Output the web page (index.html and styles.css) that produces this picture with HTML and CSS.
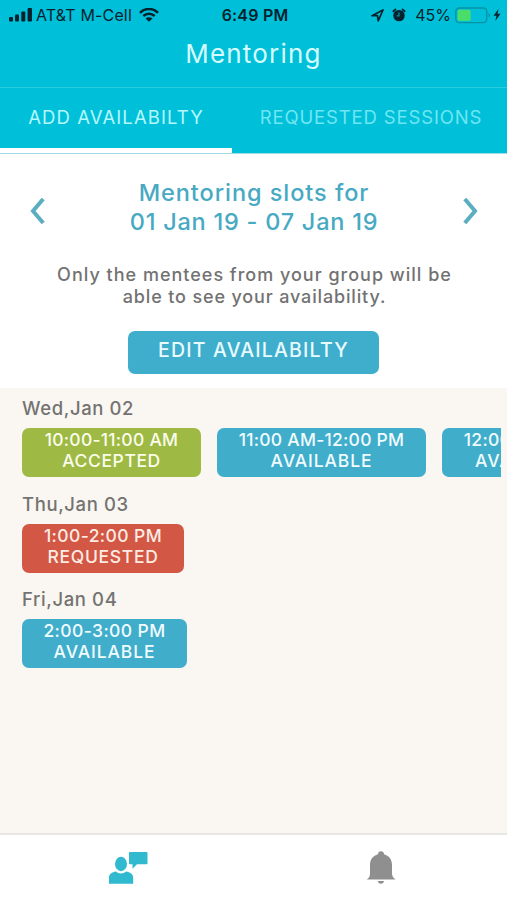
FILE: index.html
```html
<!DOCTYPE html>
<html lang="en">
<head>
    <meta charset="UTF-8">
    <meta name="viewport" content="width=device-width, initial-scale=1.0">
    <title>Mentoring</title>
    <link rel="stylesheet" href="styles.css">
</head>
<body>

    <header class="header">
        <div class="status-bar">
            <div class="status-left">
                <svg width="24" height="14" viewBox="0 0 24 14">
                    <rect x="0" y="9" width="4" height="4.5" rx="1"/>
                    <rect x="6" y="6.5" width="4" height="7" rx="1"/>
                    <rect x="12.3" y="3.5" width="4" height="10" rx="1"/>
                    <rect x="18.6" y="0" width="4.4" height="13.5" rx="1"/>
                </svg>
                <span class="carrier">AT&amp;T M-Cell</span>
                <svg class="wifi" width="20" height="14" viewBox="0 0 20 14">
                    <path d="M1 4.8C6-.2 14-.2 19 4.8M4.3 8C7.6 5 12.4 5 15.7 8" fill="none" stroke="#06222e" stroke-width="2.6"/>
                    <path d="M10 13.8L6.5 10.4C8.5 8.7 11.5 8.7 13.5 10.4Z"/>
                </svg>
            </div>
            <div class="status-time">6:49 PM</div>
            <div class="status-right">
                <svg width="13" height="13" viewBox="0 0 13 13">
                    <path d="M1 6.7L12 1L7.2 11.8L6.5 6.7Z" fill="none" stroke="#06222e" stroke-width="1.7" stroke-linejoin="round"/>
                </svg>
                <svg class="alarm" width="14" height="14" viewBox="0 0 14 14">
                    <circle cx="7" cy="7.6" r="5.7"/>
                    <path d="M.8 3.8L4 1M13.2 3.8L10 1" stroke="#06222e" stroke-width="1.8"/>
                    <path d="M7 4.3V7.8H4.6" fill="none" stroke="#0890a5" stroke-width="1.2"/>
                </svg>
                <span class="percent">45%</span>
                <svg width="37" height="17" viewBox="0 0 37 17">
                    <rect x=".8" y="1" width="31" height="14.6" rx="3.6" fill="none" stroke="#0890a5" stroke-width="1.4"/>
                    <rect x="2.6" y="2.8" width="13" height="11" rx="1.6" fill="#4ade68"/>
                    <path d="M33.5 6.2c2 .6 2 3.6 0 4.2z" fill="#0890a5"/>
                </svg>
                <svg class="bolt" width="8" height="12" viewBox="0 0 8 12">
                    <path d="M5.5 0L.5 6.8H3.5L2.3 12L7.5 4.8H4.5Z"/>
                </svg>
            </div>
        </div>
        <h1>Mentoring</h1>
        <nav class="tabs">
            <a class="tab active" href="#">ADD AVAILABILTY</a>
            <a class="tab" href="#">REQUESTED SESSIONS</a>
        </nav>
    </header>

    <section class="week">
        <div class="week-picker">
            <svg width="16" height="28" viewBox="0 0 16 28"><path d="M13.2 2L3 14L13.2 26"/></svg>
            <h2>Mentoring slots for<br><span class="dates">01 Jan 19 - 07 Jan 19</span></h2>
            <svg width="16" height="28" viewBox="0 0 16 28"><path d="M2.8 2L13 14L2.8 26"/></svg>
        </div>
        <p>Only the mentees from your group will be<br><span class="note-end">able to see your availability.</span></p>
        <button class="edit">EDIT AVAILABILTY</button>
    </section>

    <main class="days">
        <div class="day">
            <h3>Wed,Jan 02</h3>
            <div class="slots">
                <div class="slot accepted"><span class="hours">10:00-11:00 AM</span><span>ACCEPTED</span></div>
                <div class="slot long"><span class="hours">11:00 AM-12:00 PM</span><span>AVAILABLE</span></div>
                <div class="slot noon"><span class="hours">12:00-1:00 PM</span><span>AVAILABLE</span></div>
            </div>
        </div>
        <div class="day">
            <h3>Thu,Jan 03</h3>
            <div class="slots">
                <div class="slot requested"><span class="hours">1:00-2:00 PM</span><span>REQUESTED</span></div>
            </div>
        </div>
        <div class="day">
            <h3>Fri,Jan 04</h3>
            <div class="slots">
                <div class="slot afternoon"><span class="hours">2:00-3:00 PM</span><span>AVAILABLE</span></div>
            </div>
        </div>
    </main>

    <footer class="bottom-nav">
        <a href="#">
            <svg width="40" height="34" viewBox="0 0 40 34" fill="#31b9d0">
                <ellipse cx="13" cy="13" rx="6" ry="7.2"/>
                <path d="M1 32.8V27C1 23 4 21 8 20.5C10.5 23 15.5 23 18 20.5C22 21 25.2 23 25.2 27V32.8Z"/>
                <path d="M22 1H38.5Q39.5 1 39.5 2V12Q39.5 13.2 38.5 13.2H29L24.5 17.8V13.2H22Q21 13.2 21 12V2Q21 1 22 1Z"/>
            </svg>
        </a>
        <a href="#">
            <svg width="30" height="34" viewBox="0 0 30 34" fill="#8f8f8f">
                <path d="M15 .3C16.8 .3 18 1.5 18 3.3C23.5 5 26 9 26 14V22C26 25 27 26.5 29.5 28.5H.8C3.5 26.5 4 25 4 22V14C4 9 6.5 5 12 3.3C12 1.5 13.2 .3 15 .3Z"/>
                <path d="M11.8 30H18C17.6 33.5 12.2 33.5 11.8 30Z"/>
            </svg>
        </a>
    </footer>

</body>
</html>
```

FILE: styles.css
```css
* {
    box-sizing: border-box;
}
body {
    margin: 0;
    height: 900px;
    display: flex;
    flex-direction: column;
    overflow: hidden;
    background-color: #faf7f2;
    font-family: Inter, "Open Sans", sans-serif;
}
h1, h2, h3, p {
    margin: 0;
    font-weight: 500;
}
a {
    text-decoration: none;
}
svg {
    display: block;
    flex: none;
}
.header {
    height: 154px;
    background-color: #00c0d9;
    border-bottom: 1px solid #9fdde6;
}
.status-bar {
    display: grid;
    grid-template-columns: 1fr 68px 1fr;
    align-items: center;
    height: 30px;
    padding: 0 6px 0 9px;
    color: #06222e;
    fill: #06222e;
    font-size: 16px;
    white-space: nowrap;
}
.status-left, .status-right {
    display: flex;
    align-items: center;
}
.status-right {
    justify-content: flex-end;
}
.carrier {
    margin-left: 3px;
    letter-spacing: 0.15px;
}
.wifi {
    margin-left: 7px;
}
.status-time {
    font-weight: 600;
    text-align: center;
    letter-spacing: 0.2px;
}
.alarm {
    margin-left: 8px;
}
.percent {
    margin: 0 4px 0 9px;
}
.bolt {
    margin-left: 1px;
}
h1 {
    height: 57px;
    color: #d5fbff;
    font-size: 26px;
    font-weight: 400;
    line-height: 47px;
    text-align: center;
    letter-spacing: 1.2px;
}
.tabs {
    display: flex;
    height: 66px;
    border-top: 1px solid #2ccadf;
}
.tab {
    width: 232px;
    border-bottom: 5px solid transparent;
    color: #6fe6f3;
    font-size: 18.5px;
    line-height: 58px;
    text-align: center;
    white-space: nowrap;
    letter-spacing: 0.85px;
}
.tab.active {
    border-bottom-color: #fff;
    color: #b5f7fd;
    letter-spacing: 1.1px;
}
.tab + .tab {
    width: 275px;
    padding-left: 3px;
}
.week {
    height: 234px;
    padding-top: 24px;
    background-color: #fff;
    text-align: center;
}
.week-picker {
    display: flex;
    justify-content: space-between;
    align-items: center;
    height: 58px;
    padding: 0 29px 0 30px;
}
.week-picker svg {
    margin-top: 8px;
}
.week-picker path {
    fill: none;
    stroke: #5baec1;
    stroke-width: 4;
}
h2 {
    color: #48a9c3;
    font-size: 23.5px;
    line-height: 29px;
    letter-spacing: 0.95px;
}
.dates {
    letter-spacing: 0.75px;
}
.week p {
    margin-top: 28px;
    padding-left: 2px;
    color: #727272;
    font-size: 18px;
    line-height: 22px;
    letter-spacing: 1px;
}
.note-end {
    letter-spacing: 0.85px;
}
.edit {
    display: block;
    width: 251px;
    height: 43px;
    margin: 23px auto 0 128px;
    padding: 0 0 6px;
    border: none;
    border-radius: 7px;
    background-color: #3fadcc;
    color: #e8fbff;
    font-family: inherit;
    font-size: 19.5px;
    font-weight: 500;
    letter-spacing: 1.2px;
}
.days {
    flex: 1;
    padding: 8px 6px 0 22px;
}
.day {
    height: 95.7px;
}
h3 {
    color: #747371;
    font-size: 18.5px;
    line-height: 24px;
    letter-spacing: 0.6px;
}
.slots {
    display: flex;
    gap: 16px;
    margin-top: 8px;
    overflow: hidden;
}
.slot {
    display: flex;
    flex: none;
    flex-direction: column;
    align-items: center;
    width: 179px;
    height: 49px;
    padding-top: 1px;
    border-radius: 7px;
    background-color: #40adcb;
    color: #f0fcff;
    font-size: 17.5px;
    font-weight: 500;
    line-height: 21px;
    letter-spacing: 0.9px;
    white-space: nowrap;
}
.hours {
    letter-spacing: 0.25px;
}
.accepted {
    background-color: #9eb944;
    color: #fbfdec;
    letter-spacing: 0.6px;
}
.requested {
    width: 162px;
    background-color: #d35745;
    color: #fdece4;
    letter-spacing: 0.7px;
}
.requested .hours, .afternoon .hours {
    letter-spacing: 0.4px;
}
.long {
    width: 209px;
}
.noon {
    width: 168px;
}
.afternoon {
    width: 165px;
}
.bottom-nav {
    display: flex;
    height: 67px;
    padding-left: 1px;
    border-top: 2px solid #e8e6e2;
    background-color: #fff;
}
.bottom-nav a {
    display: flex;
    flex: 1;
    justify-content: center;
    padding-top: 16px;
}
```
